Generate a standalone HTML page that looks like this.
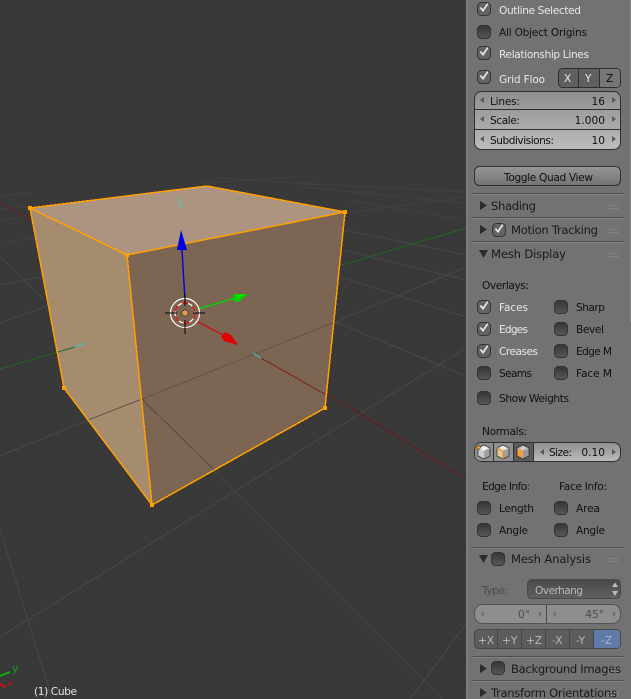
<!DOCTYPE html>
<html><head><meta charset="utf-8">
<style>
html,body{margin:0;padding:0;background:#393939;width:631px;height:699px;overflow:hidden}
svg{display:block}
text{font-family:"DejaVu Sans","Liberation Sans",sans-serif;font-size:10.6px;fill:#111;filter:blur(.25px)}
.w{fill:#e8e8e8}
.h{font-size:11.6px;fill:#1a1a1a}
.d{fill:#4c4c4c}
.l{fill:#b8b8b8}
</style></head><body>
<svg width="631" height="699" viewBox="0 0 631 699" xmlns="http://www.w3.org/2000/svg">
<defs>
<linearGradient id="cb" x1="0" y1="0" x2="0" y2="1"><stop offset="0" stop-color="#353535"/><stop offset="1" stop-color="#585858"/></linearGradient>
<linearGradient id="num" x1="0" y1="0" x2="0" y2="1"><stop offset="0" stop-color="#8e8e8e"/><stop offset="1" stop-color="#bcbcbc"/></linearGradient>
<linearGradient id="btn" x1="0" y1="0" x2="0" y2="1"><stop offset="0" stop-color="#979797"/><stop offset="1" stop-color="#727272"/></linearGradient>
<linearGradient id="tog" x1="0" y1="0" x2="0" y2="1"><stop offset="0" stop-color="#4a4a4a"/><stop offset="1" stop-color="#606060"/></linearGradient>
<g id="off"><rect x="0.5" y="0.5" width="13" height="13" rx="4" fill="url(#cb)" stroke="#333"/></g>
<g id="on"><rect x="0.5" y="0.5" width="13" height="13" rx="4" fill="#646464" stroke="#333"/><path d="M3.4 5.600 L6 8.600 L10.800 1.600" fill="none" stroke="#e8e8e8" stroke-width="1.700"/></g>
<g id="dots" fill="#9b9b9b"><rect x="0" y="0" width="1" height="1"/><rect x="3" y="0" width="1" height="1"/><rect x="6" y="0" width="1" height="1"/><rect x="9" y="0" width="1" height="1"/><rect x="0" y="3" width="1" height="1"/><rect x="3" y="3" width="1" height="1"/><rect x="6" y="3" width="1" height="1"/><rect x="9" y="3" width="1" height="1"/></g>
</defs>

<rect width="631" height="699" fill="#393939"/>

<!-- grid -->
<g stroke="#484848" stroke-width="1" fill="none">
<path d="M0 637L466 348M0 456L88 420M0 529L52 699M142 399L442 699M410 699L466 624"/>
<path d="M335 322L466 267M335 322L466 376M340 277L466 317M343 250L466 280M345 230L466 255"/>
<path d="M0 257L43 298M0 285L42 277M0 323L50 305"/>
</g>
<g stroke="#414141" stroke-width="1" fill="none">
<path d="M0 220L30 217M0 209L30 206M0 243L33 238M346 213L466 197M346 200L466 220M300 187L466 203M240 180L466 192"/>
<path d="M200 183L300 177M0 196L35 192M220 178L320 185"/>
</g>
<!-- axes behind -->
<path d="M0 203L33 222" stroke="#6f1a1a" fill="none"/>
<path d="M328 394L466 479" stroke="#701717" fill="none"/>
<path d="M0 369L58 352" stroke="#1e6a1e" fill="none"/>
<path d="M342 265L466 228" stroke="#1e6a1e" fill="none"/>

<!-- cube faces -->
<polygon points="30,208 207,186 345,212 127,255" fill="#ad9480"/>
<polygon points="30,208 127,255 152,505 64,388" fill="#a68c6f"/>
<polygon points="127,255 345,212 325,408 152,505" fill="#7d6553"/>

<!-- lines on cube -->
<g fill="none" shape-rendering="crispEdges">
<path d="M88 420L142 399" stroke="#5a5450"/>
<path d="M142 399L335 322" stroke="#544c46" stroke-dasharray="2 1"/>
<path d="M142 399L215 471" stroke="#544c46"/>
<path d="M58 352L75 347" stroke="#1e6a1e"/>
<path d="M75 347L86 343" stroke="#35c8c8"/>
<path d="M253 353L261 358" stroke="#35c8c8"/>
<path d="M261 358L328 396" stroke="#7a1e1e"/>
<path d="M179 198L180 204M180 204L181 209" stroke="#35d0d0"/>
</g>

<!-- edges -->
<g fill="none" stroke="#ffa000" stroke-width="1.500" shape-rendering="crispEdges">
<path d="M30 208L207 186L345 212L127 255L30 208"/>
<path d="M30 208L64 388L152 505L325 408L345 212"/>
<path d="M127 255L152 505"/>
</g>
<g fill="#ffa000">
<rect x="28" y="206" width="4" height="4"/><rect x="343" y="210" width="4" height="4"/><rect x="125" y="253" width="4" height="4"/>
<rect x="62" y="386" width="4" height="4"/><rect x="150" y="503" width="4" height="4"/><rect x="323" y="406" width="4" height="4"/>
</g>

<!-- gizmo -->
<path d="M182 250L185 300" stroke="#0000e0" stroke-width="1.400" fill="none"/>
<polygon points="181,230 187,250 177,250" fill="#0000e0"/>
<path d="M198 309L235 298" stroke="#00d800" stroke-width="1.200" fill="none"/>
<polygon points="233,294 248,294 238,302 234,301" fill="#00d800"/>
<path d="M198 322L223 335" stroke="#e00000" stroke-width="1.200" fill="none"/>
<polygon points="225,332 231,335 238,345 224,341 221,337" fill="#e00000"/>
<circle cx="185" cy="313" r="14.500" fill="none" stroke="#fff" stroke-width="1.200"/>
<circle cx="185" cy="313" r="10" fill="none" stroke="#fff" stroke-width="1.200"/>
<circle cx="185" cy="313" r="10" fill="none" stroke="#e00000" stroke-width="1.200" stroke-dasharray="6 5"/>
<path d="M165 313H177M193 313H205M185 294V306M185 320V334" stroke="#000" stroke-width="1" fill="none" shape-rendering="crispEdges"/>
<circle cx="185" cy="313" r="3.200" fill="#e09a50" stroke="#4a3320" stroke-width=".8"/>

<!-- mini axis -->
<path d="M0 676L10 672" stroke="#10b010" stroke-width="2" fill="none"/>
<path d="M0 684L5 687" stroke="#d01010" stroke-width="2" fill="none"/>
<text x="12" y="672" style="fill:#18a018;font-size:11px">y</text>
<text x="7" y="686" style="fill:#c01515;font-size:10px">x</text>
<text x="34" y="695" style="fill:#e4e4e4;font-size:10.600px" textLength="43">(1) Cube</text>

<!-- panel -->
<rect x="466" y="0" width="165" height="699" fill="#727272"/>
<rect x="466" y="0" width="2" height="699" fill="#7c7c7c"/>
<rect x="630" y="0" width="1" height="322" fill="#888"/>

<use href="#on" x="477" y="2"/><text class="w" x="499" y="14" textLength="82">Outline Selected</text>
<use href="#off" x="477" y="25"/><text x="499" y="36" textLength="88">All Object Origins</text>
<use href="#on" x="477" y="46"/><text class="w" x="499" y="58" textLength="90">Relationship Lines</text>
<use href="#on" x="477" y="70"/><text class="w" x="499" y="83" textLength="46">Grid Floo</text>

<!-- XYZ -->
<rect x="558.500" y="68.500" width="62" height="19" rx="4" fill="#5f5f5f" stroke="#2d2d2d"/>
<path d="M578.500 69V87" stroke="#2d2d2d"/><path d="M599.500 69V87" stroke="#2d2d2d"/>
<path d="M600 69H617a3 3 0 0 1 3 3V84a3 3 0 0 1-3 3H600Z" fill="#767676"/>
<text class="w" x="564" y="82">X</text><text class="w" x="585" y="82">Y</text><text x="606" y="82">Z</text>

<!-- numeric group -->
<rect x="474.500" y="91.500" width="146" height="58" rx="7" fill="url(#num)" stroke="#2f2f2f"/>
<path d="M475 109.500H620M475 129.500H620" stroke="#2f2f2f"/>
<g fill="#5b5b5b"><path d="M480 100L484 97V103Z"/><path d="M480 119L484 116V122Z"/><path d="M480 139L484 136V142Z"/><path d="M616 100L612 97V103Z"/><path d="M616 119L612 116V122Z"/><path d="M616 139L612 136V142Z"/></g>
<text x="490" y="105" textLength="30">Lines:</text><text x="605" y="105" text-anchor="end">16</text>
<text x="490" y="124" textLength="30">Scale:</text><text x="605" y="124" text-anchor="end">1.000</text>
<text x="490" y="144" textLength="64">Subdivisions:</text><text x="605" y="144" text-anchor="end">10</text>

<!-- toggle quad -->
<rect x="474.500" y="166.500" width="146" height="19" rx="5" fill="url(#btn)" stroke="#2f2f2f"/>
<text x="504" y="181" textLength="89">Toggle Quad View</text>

<!-- separators -->
<g shape-rendering="crispEdges"><path d="M471 193.500H624M471 217.500H624M471 241.500H624M471 547.500H624M471 656.500H624M471 680.500H624" stroke="#4f4f4f"/>
<path d="M471 194.500H624M471 218.500H624M471 242.500H624M471 548.500H624M471 657.500H624M471 681.500H624" stroke="#808080"/></g>

<!-- Shading -->
<polygon points="480,201 480,210 487,205.500" fill="#2b2b2b"/>
<text class="h" x="491" y="210" textLength="45">Shading</text><use href="#dots" x="608" y="205"/>
<polygon points="480,225 480,234 487,229.500" fill="#2b2b2b"/>
<use href="#on" x="492" y="223"/>
<text class="h" x="511" y="234" textLength="87">Motion Tracking</text><use href="#dots" x="608" y="229"/>
<polygon points="479,250 488,250 483.500,258" fill="#2b2b2b"/>
<text class="h" x="491" y="258" textLength="75">Mesh Display</text><use href="#dots" x="608" y="253"/>

<text x="482" y="289" textLength="47">Overlays:</text>
<use href="#on" x="477" y="300"/><text class="w" x="499" y="311" textLength="29">Faces</text>
<use href="#off" x="554" y="300"/><text x="576" y="311" textLength="29">Sharp</text>
<use href="#on" x="477" y="322"/><text class="w" x="499" y="333" textLength="29">Edges</text>
<use href="#off" x="554" y="322"/><text x="576" y="333" textLength="28">Bevel</text>
<use href="#on" x="477" y="344"/><text class="w" x="499" y="355" textLength="39">Creases</text>
<use href="#off" x="554" y="344"/><text x="576" y="355" textLength="36">Edge M</text>
<use href="#off" x="477" y="366"/><text x="499" y="377" textLength="33">Seams</text>
<use href="#off" x="554" y="366"/><text x="576" y="377" textLength="36">Face M</text>
<use href="#off" x="477" y="391"/><text x="499" y="402" textLength="70">Show Weights</text>

<text x="482" y="435" textLength="45">Normals:</text>

<!-- normals row -->
<rect x="474.500" y="442.500" width="146" height="19" rx="7" fill="url(#num)" stroke="#2f2f2f"/>
<path d="M481 443H493V461H481a6 6 0 0 1-6-6V449a6 6 0 0 1 6-6Z" fill="#8f8f8f"/>
<rect x="493" y="443" width="20" height="18" fill="#8f8f8f"/>
<rect x="513" y="443" width="20" height="18" fill="#5a5a5a"/>
<path d="M493.500 443V461M513.500 443V461M533.500 443V461" stroke="#2f2f2f"/>
<g>
<polygon points="478,448 484,445 490,448 484,451" fill="#f0f0f0"/><polygon points="478,448 484,451 484,459 478,456" fill="#cfcfcf"/><polygon points="484,451 490,448 490,456 484,459" fill="#a0a0a0"/>
<path d="M478 448L484 445L490 448V456L484 459L478 456Z" fill="none" stroke="#3a3a3a" stroke-width=".8"/>
<circle cx="478.500" cy="447.500" r="1.800" fill="#ffa030" stroke="#3a2a10" stroke-width=".6"/>
</g>
<g>
<polygon points="497,448 503,445 509,448 503,451" fill="#e8e8e8"/><polygon points="497,448 503,451 503,459 497,456" fill="#e8c690"/><polygon points="503,451 509,448 509,456 503,459" fill="#a0a0a0"/>
<path d="M497 448L503 445L509 448V456L503 459L497 456Z" fill="none" stroke="#3a3a3a" stroke-width=".8"/>
<path d="M497 448L503 451V459" fill="none" stroke="#e88a10" stroke-width="1"/>
</g>
<g>
<polygon points="517,448 523,445 529,448 523,451" fill="#c8c8c8"/><polygon points="517,448 523,451 523,459 517,456" fill="#f5a040"/><polygon points="523,451 529,448 529,456 523,459" fill="#999"/>
<path d="M517 448L523 445L529 448V456L523 459L517 456Z" fill="none" stroke="#333" stroke-width=".8"/>
</g>
<path d="M540 452L544 449V455Z" fill="#5b5b5b"/><path d="M616 452L612 449V455Z" fill="#5b5b5b"/>
<text x="549" y="456" textLength="23">Size:</text><text x="605" y="456" text-anchor="end">0.10</text>

<text x="482" y="490" textLength="48">Edge Info:</text><text x="559" y="490" textLength="48">Face Info:</text>
<use href="#off" x="477" y="501"/><text x="499" y="512" textLength="35">Length</text>
<use href="#off" x="554" y="501"/><text x="576" y="512" textLength="24">Area</text>
<use href="#off" x="477" y="523"/><text x="499" y="534" textLength="29">Angle</text>
<use href="#off" x="554" y="523"/><text x="576" y="534" textLength="29">Angle</text>

<!-- mesh analysis -->
<polygon points="479,555 488,555 483.500,563" fill="#2b2b2b"/>
<use href="#off" x="491" y="552"/>
<text class="h" x="511" y="563" textLength="80">Mesh Analysis</text><use href="#dots" x="608" y="558"/>

<text class="d" x="482" y="594" textLength="26">Type:</text>
<rect x="527.500" y="579.500" width="93" height="19" rx="4" fill="url(#tog)" stroke="#4a4a4a"/>
<text class="l" x="535" y="594" textLength="48">Overhang</text>
<path d="M615 582.500L618 587H612ZM615 596L618 591H612Z" fill="#bdbdbd"/>

<rect x="474.500" y="604.500" width="146" height="19" rx="8" fill="#8e8e8e" stroke="#555"/>
<path d="M546.500 605V623" stroke="#4a4a4a"/>
<g fill="#6f6f6f"><path d="M481 614L484 611V617Z"/><path d="M542 614L539 611V617Z"/><path d="M553 614L556 611V617Z"/><path d="M616 614L613 611V617Z"/></g>
<text class="d" x="530" y="618" text-anchor="end">0°</text><text class="d" x="604" y="618" text-anchor="end">45°</text>

<rect x="474.500" y="629.500" width="146" height="19" rx="4" fill="#5c5c5c" stroke="#474747"/>
<path d="M594 630H617a3 3 0 0 1 3 3V645a3 3 0 0 1-3 3H594Z" fill="#5f7ba8"/>
<path d="M497.500 630V648M521.500 630V648M545.500 630V648M569.500 630V648M593.500 630V648" stroke="#474747"/>
<text class="l" x="478" y="644">+X</text><text class="l" x="502" y="644">+Y</text><text class="l" x="526" y="644">+Z</text><text class="l" x="552" y="644">-X</text><text class="l" x="576" y="644">-Y</text><text x="601" y="644" style="fill:#a9b6cc">-Z</text>

<polygon points="480,664 480,673 487,668.500" fill="#2b2b2b"/>
<use href="#off" x="491" y="661"/>
<text class="h" x="511" y="673" textLength="110">Background Images</text><use href="#dots" x="608" y="668"/>
<polygon points="480,688 480,697 487,692.500" fill="#2b2b2b"/>
<text class="h" x="491" y="697" textLength="126">Transform Orientations</text><use href="#dots" x="608" y="692"/>
</svg>
</body></html>
